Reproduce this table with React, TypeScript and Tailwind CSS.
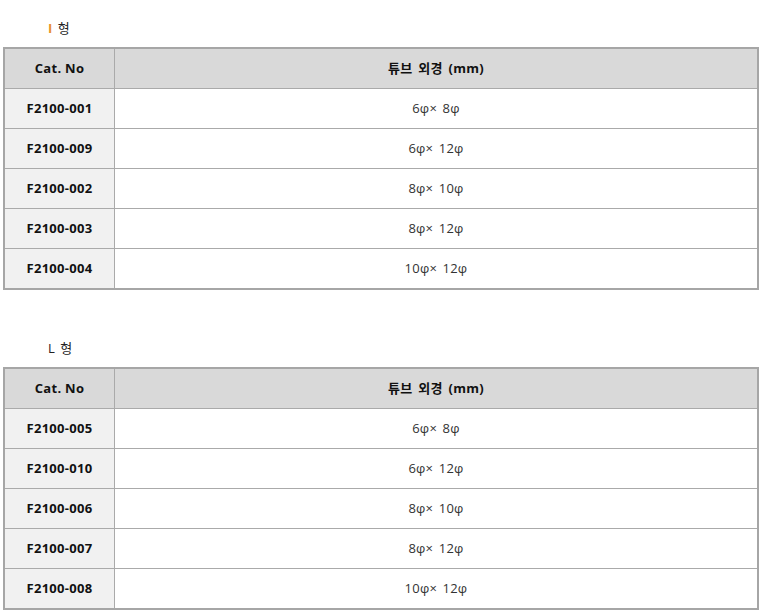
import React from "react";

const rows1 = [
  ["F2100-001", "6φ× 8φ"],
  ["F2100-009", "6φ× 12φ"],
  ["F2100-002", "8φ× 10φ"],
  ["F2100-003", "8φ× 12φ"],
  ["F2100-004", "10φ× 12φ"],
];
const rows2 = [
  ["F2100-005", "6φ× 8φ"],
  ["F2100-010", "6φ× 12φ"],
  ["F2100-006", "8φ× 10φ"],
  ["F2100-007", "8φ× 12φ"],
  ["F2100-008", "10φ× 12φ"],
];

function Table({ rows }: { rows: string[][] }) {
  return (
    <div className="ml-[3px] w-[756px] border-2 border-[#a6a6a6]">
      <div className="flex h-[39px] bg-[#d9d9d9]">
        <div className="w-[110px] border-r border-[#aaaaaa] flex items-center justify-center font-bold text-[#111] tracking-[0.3px]">
          Cat. No
        </div>
        <div className="flex-1 flex items-center justify-center font-bold text-[#111] tracking-[0.3px] [word-spacing:2px]">
          튜브 외경 (mm)
        </div>
      </div>
      {rows.map(([a, b]) => (
        <div key={a} className="flex h-[40px] border-t border-[#aaaaaa]">
          <div className="w-[110px] border-r border-[#aaaaaa] bg-[#f1f1f1] flex items-center justify-center font-bold text-[#111] tracking-[0.3px]">
            {a}
          </div>
          <div className="flex-1 bg-white flex items-center justify-center text-[#333] tracking-[0.2px] [word-spacing:2px]">
            {b}
          </div>
        </div>
      ))}
    </div>
  );
}

export default function App() {
  return (
    <div
      className="bg-white w-[762px] h-[615px] pt-[18px] text-[13px]"
      style={{ fontFamily: '"Open Sans", "Noto Sans CJK KR", sans-serif' }}
    >
      <div className="h-5 leading-5 pl-[48px] mb-[9px] text-[#222] [word-spacing:2px]">
        <span className="text-[#e8912d] font-bold">I</span> 형
      </div>
      <Table rows={rows1} />
      <div className="h-5 leading-5 pl-[48px] mt-[48px] mb-[9px] text-[#222] [word-spacing:2px]">
        L 형
      </div>
      <Table rows={rows2} />
    </div>
  );
}
